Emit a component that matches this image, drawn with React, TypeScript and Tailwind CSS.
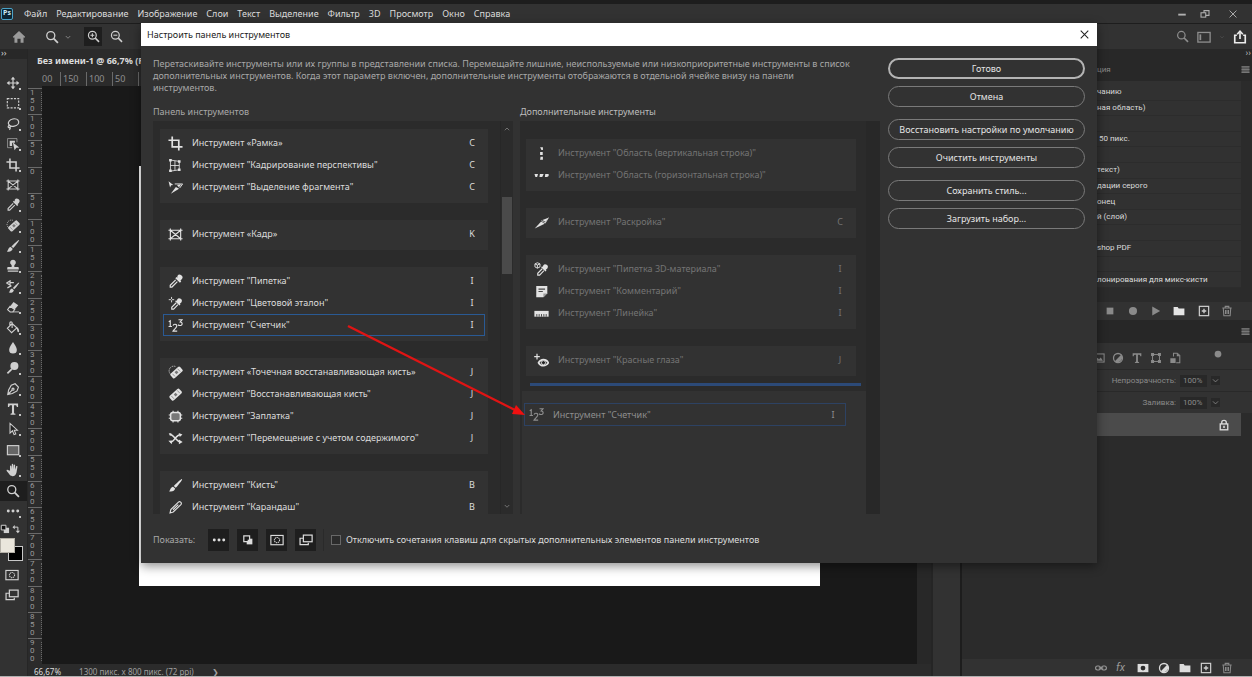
import React, { useState } from 'react';

type IconProps = { name: string; className?: string };

// все рисунки лежат в сетке 16x16
const shapes: Record<string, React.ReactNode> = {
    move: (
        <>
            <path d="M8 2v12M2 8h12" fill="none" stroke="currentColor" strokeWidth="1.4" />
            <path d="M8 0.8l2.6 3.2H5.4zM8 15.2l2.6-3.2H5.4zM0.8 8L4 5.4v5.2zM15.2 8L12 5.4v5.2z" />
        </>
    ),
    marquee: <rect x="1.5" y="3" width="13" height="10.5" fill="none" stroke="currentColor" strokeWidth="1.3" strokeDasharray="2.4 1.4" />,
    lasso: (
        <g fill="none" stroke="currentColor" strokeWidth="1.4">
            <ellipse cx="8.6" cy="6.4" rx="6" ry="4.2" transform="rotate(-12 8.6 6.4)" />
            <path d="M4.4 9.4c-2.4.4-2.6 3-.4 2.8 1.6-.2 1-2.6-.4-2.6M4.4 11.4c.6 1 .4 2.4-.6 3.2" />
        </g>
    ),
    objectSelect: (
        <>
            <path d="M12.5 6V1.8H1.8v10.4H7" fill="none" stroke="currentColor" strokeWidth="0.9" opacity="0.7" />
            <path d="M4.2 4.2h6v2.4H7v3.8H4.2z" />
            <path d="M7.8 6.4l7.4 5.6-3.4.2-2 3z" />
        </>
    ),
    crop: <path d="M4.5 0.5v11h11M0.5 4.5h11v11" fill="none" stroke="currentColor" strokeWidth="1.8" />,
    frame: (
        <g fill="none" stroke="currentColor" strokeWidth="1.2">
            <path d="M2.5 3.5h11v9h-11zM2.5 3.5l11 9M13.5 3.5l-11 9" />
            <path d="M0.5 3.5h2M2.5 1.6v2M15.5 3.5h-2M13.5 1.6v2M0.5 12.5h2M2.5 14.4v-2M15.5 12.5h-2M13.5 14.4v-2" />
        </g>
    ),
    perspective: (
        <g fill="none" stroke="currentColor" strokeWidth="0.9">
            <path d="M2.6 2.2l9.4 1.4v9L2.6 14M7.4 3v10.2M2.6 8h9.4M2.6 2.2V14" />
            <path d="M1.2 1h2.8v2.6H1.2zM10.6 2.4h2.8v2.6h-2.8zM1.2 12.2h2.8v2.6H1.2zM10.6 11.2h2.8v2.6h-2.8z" fill="currentColor" stroke="none" />
        </g>
    ),
    slice: (
        <>
            <path d="M7.6 6.8l3.8 2.6L0.8 14.4z" />
            <path d="M9 5.2l6.4-2.4-3.2 4.6z" />
            <path d="M8 6l4 2.6 3.4-5.8" fill="none" stroke="currentColor" strokeWidth="0.9" />
        </>
    ),
    sliceSelect: (
        <>
            <path d="M0.6 1.4l5 4-2.3.3L2.2 8z" />
            <path d="M7.2 4.2h8.4l-3.2 4.4" fill="none" stroke="currentColor" strokeWidth="1" />
            <path d="M8.4 7.4l3.4 1.8-8.8 5.4zM9.6 5.2l4.8-.6-2.8 3z" />
        </>
    ),
    dropper: (
        <>
            <path d="M9 1.8a2.9 2.9 0 1 1 4.9 3.4l-1.6 1.6.8.9-1.4 1.3L6.8 4.2l1.3-1.3.9.8z" transform="translate(1 .2)" />
            <path d="M8.2 6.2L2.4 12v1.9h1.8l5.8-5.8" fill="none" stroke="currentColor" strokeWidth="1.3" />
        </>
    ),
    sampler: (
        <>
            <path d="M9.8 3.6a2.6 2.6 0 1 1 4.4 3.2l-1.6 1.5.7.8-1.1 1.1-4.6-4.6 1.1-1.1.8.8z" />
            <path d="M8.8 7.2L4 12v2h2l4.6-4.8" fill="none" stroke="currentColor" strokeWidth="1.2" />
            <path d="M3.8 1v5.8M0.8 3.9h6" stroke="currentColor" strokeWidth="1" strokeDasharray="2.3 1.2" />
        </>
    ),
    materialDropper: (
        <>
            <path d="M9.8 3.6a2.6 2.6 0 1 1 4.4 3.2l-1.6 1.5.7.8-1.1 1.1-4.6-4.6 1.1-1.1.8.8z" />
            <path d="M8.8 7.2L4 12v2h2l4.6-4.8" fill="none" stroke="currentColor" strokeWidth="1.2" />
            <path d="M1 2l2.6-1.2L6.4 2v3.2L3.6 6.6 1 5.2zM1 2l2.6 1.2L6.4 2M3.6 3.2v3.4" fill="none" stroke="currentColor" strokeWidth="1" />
        </>
    ),
    spotHeal: (
        <>
            <rect x="-3" y="-6.6" width="6.6" height="13.6" rx="1.6" transform="translate(9 7.6) rotate(48)" />
            <path d="M7 7.6l2-1.8 2.2 2-2.2 2z" fill="#777" />
            <path d="M4.8 9.4l2.6 2.8M10.2 4l2.8 3" stroke="#777" strokeWidth="0.8" />
            <path d="M2 9a5 5 0 0 1 6-7.4" fill="none" stroke="currentColor" strokeWidth="0.9" strokeDasharray="1.2 1" />
        </>
    ),
    heal: (
        <>
            <rect x="-3" y="-7" width="6.4" height="14" rx="1.6" transform="translate(8 8) rotate(48)" />
            <path d="M6.2 8L8 6.2l2.2 2L8 10z" fill="#777" />
            <path d="M3.6 9.6l2.8 3M9.8 3.6l2.8 3" stroke="#777" strokeWidth="0.8" />
        </>
    ),
    patch: (
        <g fill="none" stroke="currentColor">
            <rect x="2.8" y="3.6" width="10.4" height="8.8" rx="2.4" strokeWidth="1.6" fill="#777" />
            <path d="M5.4 1.8V4M10.6 1.8V4M5.4 12.4v2M10.6 12.4v2M0.8 6.4H3M0.8 9.8H3M13 6.4h2.2M13 9.8h2.2" strokeWidth="1.2" />
        </g>
    ),
    contentMove: (
        <>
            <path d="M2 3.6c4 0 7 8 11.6 8M2.4 12C6.6 12 8.4 4 13 4" fill="none" stroke="currentColor" strokeWidth="1.7" />
            <path d="M11.6 9l4 2.8-4 2.4zM11.4 2l4 1.8-2.8 2.6zM0.8 2.4l3 .2-1.6 2.6zM0.4 10.4l4-.4-.4 4z" />
        </>
    ),
    brush: (
        <>
            <path d="M15 1.2c.7.6-5.4 8-6.8 9.2L6.2 8.6C7.8 7 14.2.6 15 1.2z" />
            <path d="M5.4 9.2l2.2 2c-.4 2.6-3.2 3.8-6.6 3 1.6-.6 1.2-4.4 4.4-5z" />
        </>
    ),
    pencil: (
        <g fill="none" stroke="currentColor" strokeWidth="1.2">
            <path d="M2.2 13.8l.8-3.6L11.4 2c1.2-1 3.6 1 2.6 2.6L5.6 12.8z" />
            <path d="M5.4 10.4l5.6-5.4" />
        </g>
    ),
    stamp: <path d="M8 0.8a3.2 3.2 0 0 1 2.2 5.6c-.8.8-.8 1.6-.6 2.8h3.8c.8 0 1.2.6 1.2 1.4v1.4H1.4v-1.4c0-.8.4-1.4 1.2-1.4h3.8c.2-1.2.2-2-.6-2.8A3.2 3.2 0 0 1 8 .8zM2 13h12v1.6H2z" />,
    history: (
        <>
            <path d="M15 2.8c.7.5-4.4 6.8-5.6 7.8L7.8 9.2C9.2 7.8 14.2 2.2 15 2.8zM7 9.8l2 1.8c-.4 2.2-2.8 3.4-6 2.8 1.6-.6 1.2-4 4-4.6z" />
            <path d="M0.8 3.4l3.8-2.4v4.8zM4 3h5M1.6 9l4.6-2.6" fill="none" stroke="currentColor" strokeWidth="1.4" />
        </>
    ),
    eraser: (
        <>
            <path d="M8.6 2.4L14 6l-4 4.6L4.8 7z" />
            <path d="M4.6 7.2L1.8 11l3 2.6h3L10 10.8z" fill="none" stroke="currentColor" strokeWidth="1.2" />
            <path d="M8 13.6h7" stroke="currentColor" strokeWidth="1" />
        </>
    ),
    bucket: (
        <>
            <path d="M7 3L1.6 8.4l4.8 5 6-5.6zM7 8V2.2C7 .6 4.4.6 4.4 2.2v3.4" fill="none" stroke="currentColor" strokeWidth="1.3" />
            <path d="M12 7c2 .4 3.4 2.4 3 5.4-.8.8-1.8.4-2-.6-.2-1.8-.6-3-2.2-3.8z" />
        </>
    ),
    blur: <path d="M8 1c2 3.4 4.4 6 4.4 9a4.4 4.4 0 0 1-8.8 0c0-3 2.4-5.6 4.4-9z" />,
    dodge: (
        <>
            <circle cx="9.6" cy="5.8" r="4.6" />
            <path d="M6.6 9.2L1.6 14.2" stroke="currentColor" strokeWidth="1.9" />
        </>
    ),
    pen: (
        <g fill="none" stroke="currentColor" strokeWidth="1.3">
            <path d="M10.4 2l3.8 3.8-1.6 4.4-5.4 3L2 14.2 3 9l3-5.4zM2.2 14l4.8-4.8" />
            <circle cx="8" cy="8.2" r="1.2" />
        </g>
    ),
    type: <path d="M2.2 1.8h11.6V5.6h-1.4c-.2-1.6-.8-2-2.2-2H9.2v8.8c0 .8.4 1 1.6 1.1v1H5.2v-1c1.2-.1 1.6-.3 1.6-1.1V3.6H5.8c-1.4 0-2 .4-2.2 2H2.2z" />,
    arrow: <path d="M4.6 1.6v11l2.8-2.6 1.8 4.4 2-.8-1.8-4.2h3.6z" fill="#222" stroke="currentColor" strokeWidth="1.2" />,
    rect: <rect x="1.6" y="3" width="13" height="10.4" fill="#666" stroke="currentColor" strokeWidth="1.3" />,
    hand: <path d="M4.6 8.8V3.6c0-1 1.5-1 1.6 0l.4 3.6V1.8c0-1.1 1.6-1.1 1.6 0v5.4L8.8 2.4c.1-1 1.6-.9 1.6.2v5l1.2-3.8c.4-.9 1.7-.5 1.5.5L12 10.8c-.6 2.6-2 4.2-4.6 4.2-2 0-3-1-4-2.6L.8 9c-.5-.9.5-1.7 1.3-1z" />,
    zoom: (
        <g fill="none" stroke="currentColor">
            <circle cx="6.6" cy="6.4" r="4.6" strokeWidth="1.5" />
            <path d="M10 9.8l4.8 4.8" strokeWidth="2" />
        </g>
    ),
    zoomIn: (
        <g fill="none" stroke="currentColor">
            <circle cx="6.6" cy="6.4" r="4.8" strokeWidth="1.5" />
            <path d="M10.2 10l4.6 4.6" strokeWidth="1.9" />
            <path d="M6.6 4v4.8M4.2 6.4H9" strokeWidth="1.3" />
        </g>
    ),
    zoomOut: (
        <g fill="none" stroke="currentColor">
            <circle cx="6.6" cy="6.4" r="4.8" strokeWidth="1.5" />
            <path d="M10.2 10l4.6 4.6" strokeWidth="1.9" />
            <path d="M4.2 6.4H9" strokeWidth="1.3" />
        </g>
    ),
    dots: (
        <>
            <circle cx="2.6" cy="8" r="1.7" />
            <circle cx="8" cy="8" r="1.7" />
            <circle cx="13.4" cy="8" r="1.7" />
        </>
    ),
    swap: (
        <>
            <path d="M3.6 5h5.8v6" fill="none" stroke="currentColor" strokeWidth="1.6" />
            <path d="M4.4 1.6v6.8L0.8 5zM6 10.6h6.8L9.4 14.6z" />
        </>
    ),
    defaults: (
        <>
            <path d="M6 6h8.5v8.5H6z" />
            <path d="M2 2h7.5v7.5H2z" fill="#111" stroke="currentColor" strokeWidth="1.6" />
        </>
    ),
    smallColors: (
        <>
            <path d="M6.5 6.5H13V13H6.5z" />
            <path d="M3.2 3.2h6.6v6.6H3.2z" fill="#1b1b1b" stroke="currentColor" strokeWidth="1.4" />
            <path d="M7.6 7.6h4.8v4.8H7.6z" />
        </>
    ),
    mask: (
        <g fill="none" stroke="currentColor">
            <rect x="1" y="2.8" width="14" height="10.6" strokeWidth="1.3" />
            <circle cx="8" cy="8.1" r="3" strokeWidth="1.2" strokeDasharray="1.5 .7" />
        </g>
    ),
    screen: (
        <g fill="none" stroke="currentColor" strokeWidth="1.4">
            <path d="M4.6 6H1.2v7.4h9.4V11" />
            <rect x="5" y="2.4" width="10" height="7.6" />
        </g>
    ),
    count: (
        <g fill="none" stroke="currentColor" strokeWidth="1.2">
            <path d="M0.8 4L2.4 3v6M0.6 9h3.6" />
            <path d="M5.4 8.2c.4-2.2 4.2-2 4 .4-.2 2-2.8 3.2-4 5.4h4.4" />
            <path d="M11.2 1.8h3.8l-2 2.4c3 .2 2.6 4.2-.4 3.8-.8 0-1.4-.4-1.8-.8" />
        </g>
    ),
    colMarquee: <path d="M6.5 1.2h3v3H8zM6.5 6.5h2.8v3H6.5zM7 11.5h2.5v3.2h-3z" />,
    rowMarquee: <path d="M0.5 6.5h3.8l-1 3H1.5zM6.3 6.5h4l-1.5 3H5.8zM12 6.5h3.6v2L14 9.5h-2.4z" />,
    note: (
        <>
            <path d="M2.4 2h11.8v7.8l-4.2 4.4H2.4z" />
            <path d="M4.8 5.4h7M4.8 8h4.6" fill="none" stroke="#444" strokeWidth="1.3" />
            <path d="M10 14V10h4z" fill="#999" />
        </>
    ),
    ruler: (
        <>
            <path d="M0.4 5.2h15.2v6.2H0.4z" />
            <path d="M3 11.4V8.6M5.5 11.4V8.6M8 11.4V8.6M10.5 11.4V8.6M13 11.4V8.6" stroke="#444" strokeWidth="1" />
        </>
    ),
    redEye: (
        <>
            <path d="M3.2 0.8v6M0.2 3.8h6" stroke="currentColor" strokeWidth="1.3" />
            <path d="M4.8 10.4c2.4-4.4 8-4.4 10.6 0-2.6 4.2-8.2 4.2-10.6 0z" fill="none" stroke="currentColor" strokeWidth="1.7" />
            <circle cx="10.1" cy="10.3" r="2.2" fill="#222" stroke="currentColor" strokeWidth="1" />
        </>
    ),
    home: <path d="M8 1.2l7 6.6-1 1.2-.8-.6v6.2H9.8V10H6.2v4.6H2.8V8.4L2 9 1 7.8z" />,
    workspace: (
        <g fill="none" stroke="currentColor" strokeWidth="1.5">
            <rect x="1" y="2.8" width="14" height="11" />
            <path d="M3.8 5v6.6" strokeWidth="2" />
        </g>
    ),
    share: (
        <g fill="none" stroke="currentColor" strokeWidth="1.9">
            <path d="M4.4 6H2v8.6h12V6h-2.4M8 10.4V2.6" />
            <path d="M4.8 4.8L8 1.4l3.2 3.4" />
        </g>
    ),
    close: <path d="M2.5 2.5l11 11M13.5 2.5l-11 11" fill="none" stroke="currentColor" strokeWidth="1.5" />,
    minimize: <path d="M2 7.5h12v3H2z" />,
    restore: (
        <g fill="none" stroke="currentColor" strokeWidth="1.7">
            <rect x="1.6" y="6" width="7.6" height="7" />
            <path d="M6.4 6V2.6h8v7.6H9.2" />
        </g>
    ),
    chevron: <path d="M3.5 6l4.5 4.5L12.5 6" fill="none" stroke="currentColor" strokeWidth="1.5" />,
    chevronUp: <path d="M3.5 10.5L8 6l4.5 4.5" fill="none" stroke="currentColor" strokeWidth="1.5" />,
    stop: <path d="M3.5 3.5h9v9h-9z" />,
    circle: <circle cx="8" cy="8" r="5.4" />,
    play: <path d="M3 2l10.5 6L3 14z" />,
    folder: <path d="M0.8 2.8h5.4l1.4 1.8h7.6v9H0.8z" />,
    add: (
        <>
            <rect x="1.8" y="1.8" width="12.4" height="12.4" fill="none" stroke="currentColor" strokeWidth="1.6" />
            <path d="M8 5v6M5 8h6" stroke="currentColor" strokeWidth="1.8" />
        </>
    ),
    trash: (
        <g fill="none" stroke="currentColor" strokeWidth="1.4">
            <path d="M1.8 4h12.4M5.6 4V1.8h4.8V4M3 4l.8 10.4h8.4L13 4M6 6.6v5.4M8 6.6v5.4M10 6.6v5.4" />
        </g>
    ),
    image: (
        <>
            <rect x="1.2" y="2.6" width="13.6" height="10.8" fill="none" stroke="currentColor" strokeWidth="1.4" />
            <path d="M3 11.6l3-3.8 2 1.8 2.4-2.4 2.8 4.4z" />
        </>
    ),
    adjust: (
        <>
            <circle cx="8" cy="8" r="6" fill="none" stroke="currentColor" strokeWidth="1.7" />
            <path d="M12.2 3.8a6 6 0 0 1-8.4 8.4z" />
        </>
    ),
    shape: (
        <>
            <rect x="3.4" y="3.4" width="9.2" height="9.2" fill="none" stroke="currentColor" strokeWidth="1.3" />
            <path d="M1.4 1.4h4v4h-4zM10.6 1.4h4v4h-4zM1.4 10.6h4v4h-4zM10.6 10.6h4v4h-4z" />
        </>
    ),
    smart: (
        <>
            <path d="M6 6V1.6h5l3.4 3.2v9.6H9.6" fill="none" stroke="currentColor" strokeWidth="1.4" />
            <path d="M1.8 8.2h7v6.4h-7zM10.4 1.6v4h4z" />
        </>
    ),
    lock: (
        <>
            <rect x="3" y="6.6" width="10" height="7.8" fill="none" stroke="currentColor" strokeWidth="1.8" />
            <path d="M5 6.6V4.4c0-3.4 6-3.4 6 0v2.2" fill="none" stroke="currentColor" strokeWidth="1.8" />
            <path d="M7 9h2v3H7z" />
        </>
    ),
    link: (
        <g fill="none" stroke="currentColor" strokeWidth="1.5">
            <rect x="0.8" y="5.4" width="6.4" height="5.2" rx="2.6" />
            <rect x="8.8" y="5.4" width="6.4" height="5.2" rx="2.6" />
            <path d="M5 8h6" />
        </g>
    ),
    layerMask: (
        <>
            <path d="M0.8 2.6h14.4v11H0.8z" />
            <circle cx="8" cy="8.1" r="3.2" fill="#2b2b2b" />
        </>
    ),
    burger: (
        <>
            <path d="M1 2h14v12H1z" opacity="0.6" />
            <path d="M1 2h14v2H1zM1 7h14v2H1zM1 12h14v2H1z" />
        </>
    ),
};

const Icon = ({ name, className }: IconProps) => (
    <svg viewBox="0 0 16 16" fill="currentColor" aria-hidden="true" className={`shrink-0 ${className ?? ''}`}>
        {shapes[name]}
    </svg>
);

type Tool = { icon: string; label: string; hotkey?: string; selected?: boolean };

const menu = ['Файл', 'Редактирование', 'Изображение', 'Слои', 'Текст', 'Выделение', 'Фильтр', '3D', 'Просмотр', 'Окно', 'Справка'];

const toolbar = [
    'move', 'marquee', 'lasso', 'objectSelect', 'crop', 'frame', 'dropper', 'spotHeal', 'brush', 'stamp', 'history',
    'eraser', 'bucket', 'blur', 'dodge', 'pen', 'type', 'arrow', 'rect', 'hand', 'zoom', 'dots',
];

const rulerMarks = [150, 100, 50, 0, 50, 100, 150, 200, 250, 300, 350, 400, 450, 500, 550, 600, 650, 700, 750, 800, 850, 900];

const mainTools: Tool[][] = [
    [
        { icon: 'crop', label: 'Инструмент «Рамка»', hotkey: 'C' },
        { icon: 'perspective', label: 'Инструмент "Кадрирование перспективы"', hotkey: 'C' },
        { icon: 'sliceSelect', label: 'Инструмент "Выделение фрагмента"', hotkey: 'C' },
    ],
    [{ icon: 'frame', label: 'Инструмент «Кадр»', hotkey: 'K' }],
    [
        { icon: 'dropper', label: 'Инструмент "Пипетка"', hotkey: 'I' },
        { icon: 'sampler', label: 'Инструмент "Цветовой эталон"', hotkey: 'I' },
        { icon: 'count', label: 'Инструмент "Счетчик"', hotkey: 'I', selected: true },
    ],
    [
        { icon: 'spotHeal', label: 'Инструмент «Точечная восстанавливающая кисть»', hotkey: 'J' },
        { icon: 'heal', label: 'Инструмент "Восстанавливающая кисть"', hotkey: 'J' },
        { icon: 'patch', label: 'Инструмент "Заплатка"', hotkey: 'J' },
        { icon: 'contentMove', label: 'Инструмент "Перемещение с учетом содержимого"', hotkey: 'J' },
    ],
    [
        { icon: 'brush', label: 'Инструмент "Кисть"', hotkey: 'B' },
        { icon: 'pencil', label: 'Инструмент "Карандаш"', hotkey: 'B' },
    ],
];

const extraTools: Tool[][] = [
    [
        { icon: 'colMarquee', label: 'Инструмент "Область (вертикальная строка)"' },
        { icon: 'rowMarquee', label: 'Инструмент "Область (горизонтальная строка)"' },
    ],
    [{ icon: 'slice', label: 'Инструмент "Раскройка"', hotkey: 'C' }],
    [
        { icon: 'materialDropper', label: 'Инструмент "Пипетка 3D-материала"', hotkey: 'I' },
        { icon: 'note', label: 'Инструмент "Комментарий"', hotkey: 'I' },
        { icon: 'ruler', label: 'Инструмент "Линейка"', hotkey: 'I' },
    ],
    [{ icon: 'redEye', label: 'Инструмент "Красные глаза"', hotkey: 'J' }],
];

// видимые части строк, остальное закрыто окном
const presets = [
    'чанию', 'ная область)', '', ' 50 пикс.', '', 'текст)', 'дации серого', 'онец', 'й (слой)', '', 'shop PDF', '', 'лонирования для микс-кисти',
];

const ToolGroup = ({ tools, dim }: { tools: Tool[]; dim?: boolean }) => (
    <ul className="bg-[#323232] px-[3px] pt-[3px] pb-[5px]">
        {tools.map((tool) => (
            <li
                key={tool.label}
                className={`flex h-[22px] items-center border px-1 ${tool.selected ? 'border-[#2a5a94]' : 'border-transparent'}`}
            >
                <Icon name={tool.icon} className="h-[15px] w-[15px] text-[#e2e2e2]" />
                <span className={`ml-[9px] flex-1 whitespace-nowrap ${dim ? 'text-[#747474]' : 'text-[#dcdcdc]'}`}>{tool.label}</span>
                <span className={`w-4 text-center ${dim ? 'text-[#747474]' : 'text-[#dcdcdc]'}`}>{tool.hotkey}</span>
            </li>
        ))}
    </ul>
);

const PillButton = ({ text, primary }: { text: string; primary?: boolean }) => (
    <button
        type="button"
        className={`h-[21px] w-full rounded-full whitespace-nowrap text-[#e4e4e4] ${primary ? 'border-2 border-[#b4b4b4]' : 'border border-[#7a7a7a]'}`}
    >
        {text}
    </button>
);

const CustomizeDialog = () => {
    const [disableKeys, setDisableKeys] = useState(false);

    return (
        <section
            role="dialog"
            aria-labelledby="dialog-title"
            className="absolute top-[23px] right-[155px] left-[141px] bg-[#323232] shadow-[0_3px_10px_rgba(0,0,0,0.45)]"
        >
            <header className="flex h-[23px] items-center justify-between bg-white pr-[7px] pl-[6px]">
                <h1 id="dialog-title" className="text-[#1c1c1c]">Настроить панель инструментов</h1>
                <button type="button" aria-label="Закрыть" className="text-[#222]">
                    <Icon name="close" className="h-[11px] w-[11px]" />
                </button>
            </header>

            <div className="flex h-[517px] items-start pt-3 pr-3 pl-3">
                <div className="flex-1">
                    <p className="h-9 w-[702px] leading-[12px] text-[#a8a8a8]">
                        Перетаскивайте инструменты или их группы в представлении списка. Перемещайте лишние, неиспользуемые или
                        низкоприоритетные инструменты в список дополнительных инструментов. Когда этот параметр включен, дополнительные
                        инструменты отображаются в отдельной ячейке внизу на панели инструментов.
                    </p>

                    <div className="mt-2 flex gap-[7px]">
                        <div className="w-[360px]">
                            <h2 className="h-[19px] leading-[19px] text-[#a8a8a8]">Панель инструментов</h2>
                            <div className="flex h-[393px] overflow-hidden bg-[#2b2b2b]">
                                <div className="flex flex-1 flex-col gap-[17px] pt-2 pr-3 pl-[7px]">
                                    {mainTools.map((tools) => (
                                        <ToolGroup key={tools[0].label} tools={tools} />
                                    ))}
                                </div>
                                {/* полоса прокрутки */}
                                <div className="flex w-[13px] flex-col items-center justify-between border-l border-[#272727] py-1 text-[#8a8a8a]">
                                    <Icon name="chevronUp" className="h-2 w-2" />
                                    <div className="mt-[64px] mb-auto h-[77px] w-[10px] bg-[#4a4a4a]" />
                                    <Icon name="chevron" className="h-2 w-2" />
                                </div>
                            </div>
                        </div>

                        <div className="w-[360px]">
                            <h2 className="h-[19px] leading-[19px] text-[#bcbcbc]">Дополнительные инструменты</h2>
                            <div className="flex h-[393px] overflow-hidden bg-[#2b2b2b]">
                                <div className="flex flex-1 flex-col">
                                    <div className="flex flex-col gap-[17px] pt-[18px] pr-[10px] pl-[6px]">
                                        {extraTools.map((tools) => (
                                            <ToolGroup key={tools[0].label} tools={tools} dim />
                                        ))}
                                    </div>
                                    <div className="mt-[7px] ml-[10px] h-[3px] w-[331px] shrink-0 bg-[#2c4a78]" />
                                    <div className="mt-[5px] ml-[2px] flex-1 bg-[#323232] pt-3 pl-[2px]">
                                        <div className="flex h-[23px] w-[322px] items-center border border-[#2d4263] px-1 text-[#8e8e8e]">
                                            <Icon name="count" className="h-[15px] w-[15px]" />
                                            <span className="ml-[9px] flex-1">Инструмент "Счетчик"</span>
                                            <span className="w-4 text-center">I</span>
                                        </div>
                                    </div>
                                </div>
                                <div className="w-[14px] bg-[#282828]" />
                            </div>
                        </div>
                    </div>

                    <div className="mt-[14px] flex h-[23px] items-center text-[#a8a8a8]">
                        <span className="w-[55px]">Показать:</span>
                        <div className="flex gap-2 text-[#dcdcdc]">
                            {['dots', 'smallColors', 'mask', 'screen'].map((name) => (
                                <button key={name} type="button" aria-label={name} className="flex h-[22px] w-[21px] items-center justify-center bg-[#1e1e1e]">
                                    <Icon name={name} className="h-[14px] w-[14px]" />
                                </button>
                            ))}
                        </div>
                        <div className="mx-[7px] h-[22px] w-px bg-[#2a2a2a]" />
                        <label className="flex items-center gap-[5px] whitespace-nowrap text-[#dcdcdc]">
                            <input
                                type="checkbox"
                                checked={disableKeys}
                                onChange={(e) => setDisableKeys(e.target.checked)}
                                className="h-[10px] w-[10px] appearance-none border border-[#686868] bg-[#2b2b2b] checked:bg-[#9a9a9a]"
                            />
                            Отключить сочетания клавиш для скрытых дополнительных элементов панели инструментов
                        </label>
                    </div>
                </div>

                <div className="flex w-[197px] flex-col gap-3">
                    <div className="flex flex-col gap-[7px]">
                        <PillButton text="Готово" primary />
                        <PillButton text="Отмена" />
                    </div>
                    <div className="flex flex-col gap-[7px]">
                        <PillButton text="Восстановить настройки по умолчанию" />
                        <PillButton text="Очистить инструменты" />
                    </div>
                    <div className="flex flex-col gap-[7px]">
                        <PillButton text="Сохранить стиль..." />
                        <PillButton text="Загрузить набор..." />
                    </div>
                </div>
            </div>

            {/* стрелка переноса инструмента */}
            <svg viewBox="0 0 180 96" fill="none" aria-hidden="true" className="pointer-events-none absolute top-[300px] left-[205px] h-[96px] w-[180px]">
                <path d="M2 3l167 84" stroke="#e01414" strokeWidth="2.4" />
                <path d="M179 92l-13-1 4-9z" fill="#f01010" />
            </svg>
        </section>
    );
};

const ToolStrip = () => (
    <nav className="flex w-7 shrink-0 flex-col border-r border-[#262626] bg-[#323232] text-[#d0d0d0]">
        <span className="h-[10px] bg-[#282828] pl-px text-[9px] leading-[8px]">››</span>
        <div className="mt-[14px] flex h-[448px] flex-col justify-between">
            {toolbar.map((name) => (
                <button
                    key={name}
                    type="button"
                    aria-label={name}
                    className={`relative flex h-5 w-full items-center justify-center pr-[2px] ${name === 'zoom' ? 'bg-[#1e1e1e]' : ''}`}
                >
                    <Icon name={name} className="h-[14px] w-[14px]" />
                    {name !== 'frame' && name !== 'zoom' && <span className="absolute right-[6px] bottom-[3px] h-[2px] w-[2px] bg-[#c4c4c4]" />}
                </button>
            ))}
        </div>
        <div className="flex h-4 items-center justify-between pr-[5px]">
            <Icon name="defaults" className="h-[10px] w-[10px]" />
            <Icon name="swap" className="h-[10px] w-[10px]" />
        </div>
        <div className="relative h-[25px]">
            <span className="absolute top-[9px] left-2 h-[15px] w-[15px] border border-[#c8c8c8] bg-black" />
            <span className="absolute top-[1px] left-0 h-[15px] w-[15px] border border-[#b5b1a8] bg-[#eae6dc]" />
        </div>
        <button type="button" aria-label="mask" className="mt-[3px] flex h-5 items-center justify-center pr-[3px]">
            <Icon name="mask" className="h-[14px] w-[14px]" />
        </button>
        <button type="button" aria-label="screen" className="flex h-5 items-center justify-center pr-[3px]">
            <Icon name="screen" className="h-[14px] w-[14px]" />
        </button>
    </nav>
);

const DocumentArea = () => (
    <main className="flex min-w-0 flex-1 flex-col bg-[#2b2b2b]">
        <div className="flex h-[23px] items-center pl-[9px] text-[9px] font-bold whitespace-nowrap text-[#dcdcdc]">Без имени-1 @ 66,7% (RGB/8)</div>
        <div className="flex h-[14px] text-[9px] leading-[14px] text-[#8e8e8e]">
            <span className="w-[14px]" />
            <span className="w-[18px] overflow-hidden">00</span>
            {[150, 100, 50, 0].map((mark) => (
                <span key={mark} className="w-[26px] border-l border-[#6a6a6a] pl-[2px]">{mark}</span>
            ))}
        </div>
        <div className="flex min-h-0 flex-1">
            <div className="flex w-[14px] shrink-0 flex-col pt-[2px] font-[Roboto,sans-serif] text-[8px] text-[#9a9a9a]">
                {rulerMarks.map((mark, i) => (
                    <div key={i} className="flex flex-1 justify-between border-t border-[#6a6a6a] pl-[2px]">
                        <span className="flex flex-col leading-[8px]">
                            {String(mark).split('').map((digit, n) => (
                                <span key={n}>{digit}</span>
                            ))}
                        </span>
                        <span className="my-[3px] border-r border-dotted border-[#6a6a6a]" />
                    </div>
                ))}
            </div>
            <div className="min-w-0 flex-1 bg-[#191919] pt-20 pl-[97px]">
                <div className="h-[420px] w-[681px] bg-white" />
            </div>
            <div className="w-[14px] bg-[#282828]" />
        </div>
        <footer className="flex h-3 items-center gap-[18px] pt-1 pl-[6px] text-[8px] whitespace-nowrap text-[#a0a0a0]">
            <span className="text-[#dcdcdc]">66,67%</span>
            <span>1300 пикс. x 800 пикс. (72 ppi)</span>
            <span>❯</span>
        </footer>
    </main>
);

const PercentField = ({ id, label }: { id: string; label: string }) => (
    <div className="flex h-[22px] items-center justify-end gap-1 border-t border-[#292929] pr-8">
        <label htmlFor={id}>{label}</label>
        <input id={id} defaultValue="100%" className="h-3 w-[27px] bg-[#282828] pl-[3px]" />
        <Icon name="chevron" className="h-[9px] w-[9px] bg-[#282828]" />
    </div>
);

const SidePanels = () => (
    <aside className="flex w-[290px] shrink-0 flex-col bg-[#2b2b2b] font-[Roboto,'Noto_Sans',sans-serif] text-[8px] text-[#8a8a8a]">
        <span className="h-[9px] bg-[#282828] pr-px text-right text-[9px] leading-[8px] text-[#c0c0c0]">››</span>
        <div className="flex h-[23px] items-center justify-between bg-[#282828] pr-[2px] pl-[135px]">
            <span>ция</span>
            <Icon name="burger" className="h-[9px] w-[9px] text-[#777]" />
        </div>
        <ul className="mr-[11px] flex h-[207px] flex-col bg-[#313131] pt-1 whitespace-pre text-[#dcdcdc]">
            {presets.map((text, i) => (
                <li key={i} className="flex flex-1 items-center border-b border-[#2c2c2c] pl-[135px]">{text}</li>
            ))}
        </ul>
        <div className="mt-[14px] flex h-[18px] items-center justify-end gap-[11px] bg-[#323232] pr-[19px]">
            <Icon name="stop" className="h-3 w-3" />
            <Icon name="circle" className="h-3 w-3" />
            <Icon name="play" className="h-3 w-3" />
            <Icon name="folder" className="h-3 w-3 text-[#e4e4e4]" />
            <Icon name="add" className="ml-[2px] h-3 w-3 text-[#cfcfcf]" />
            <Icon name="trash" className="h-3 w-3" />
        </div>
        <div className="flex h-[23px] items-center justify-end bg-[#272727] pr-[2px]">
            <Icon name="burger" className="h-[9px] w-[9px] text-[#777]" />
        </div>
        <div className="bg-[#323232]">
            <div className="flex h-[26px] items-center justify-end gap-[7px] pt-1 pr-[29px]">
                <Icon name="image" className="h-3 w-3" />
                <Icon name="adjust" className="h-3 w-3" />
                <Icon name="type" className="h-3 w-3" />
                <Icon name="shape" className="h-3 w-3" />
                <Icon name="smart" className="h-3 w-3" />
                <Icon name="circle" className="mb-2 ml-[25px] h-[10px] w-[10px]" />
            </div>
            <PercentField id="opacity" label="Непрозрачность:" />
            <PercentField id="fill" label="Заливка:" />
        </div>
        <div className="mr-[11px] flex h-[23px] items-center justify-end bg-[#4b4b4b] pr-[11px] text-[#dcdcdc]">
            <Icon name="lock" className="h-3 w-3" />
        </div>
        <div className="mt-auto flex h-[17px] items-center justify-end gap-[9px] bg-[#323232] pr-[19px] text-[#dcdcdc]">
            <Icon name="link" className="h-3 w-3 text-[#999]" />
            <span className="w-3 text-[11px] leading-3 text-[#999] italic">fx</span>
            <Icon name="layerMask" className="h-3 w-3" />
            <Icon name="adjust" className="h-3 w-3" />
            <Icon name="folder" className="h-3 w-3" />
            <Icon name="add" className="h-3 w-3 text-[#cfcfcf]" />
            <Icon name="trash" className="h-3 w-3 text-[#888]" />
        </div>
    </aside>
);

const App = () => (
    <div className="relative flex h-screen flex-col overflow-hidden border-b border-[#b0b0b0] bg-[#1d1d1d] pt-1 font-['Noto_Sans','Open_Sans',sans-serif] text-[9px]">
        <header className="flex h-[19px] shrink-0 items-center bg-[#323232] pl-[1px] text-[#dcdcdc]">
            <span className="flex h-3 w-3 items-center justify-center rounded-[2px] border border-[#4ba3c7] bg-[#0b2433] text-[7px] font-bold text-[#cfeaf5]">Ps</span>
            <nav className="ml-[11px] flex gap-[9px]">
                {menu.map((item) => (
                    <a key={item} href="#">{item}</a>
                ))}
            </nav>
            <div className="ml-auto flex items-center gap-[13px] pr-[14px] text-[#b0b0b0]">
                <Icon name="minimize" className="h-[10px] w-[10px]" />
                <Icon name="restore" className="h-[10px] w-[10px]" />
                <Icon name="close" className="ml-[5px] h-[10px] w-[10px]" />
            </div>
        </header>
        <div className="mt-px flex h-[25px] shrink-0 items-center bg-[#323232] pl-3 text-[#cfcfcf]">
            <Icon name="home" className="h-[14px] w-[14px] text-[#9a9a9a]" />
            <Icon name="zoom" className="ml-[19px] h-[14px] w-[14px]" />
            <Icon name="chevron" className="ml-[5px] h-2 w-2 text-[#9a9a9a]" />
            <button type="button" aria-label="zoom in" className="ml-3 flex h-[19px] w-[18px] items-center justify-center bg-[#1e1e1e]">
                <Icon name="zoomIn" className="h-[13px] w-[13px]" />
            </button>
            <button type="button" aria-label="zoom out" className="ml-2">
                <Icon name="zoomOut" className="h-[13px] w-[13px]" />
            </button>
            <div className="ml-auto flex items-center gap-2 pr-[5px] text-[#8e8e8e]">
                <Icon name="zoom" className="h-[13px] w-[13px]" />
                <Icon name="workspace" className="h-[14px] w-[14px]" />
                <Icon name="chevron" className="h-[6px] w-[6px] text-[#5a5a5a]" />
                <Icon name="share" className="h-[14px] w-[14px] text-[#ececec]" />
            </div>
        </div>
        <div className="flex min-h-0 flex-1">
            <ToolStrip />
            <DocumentArea />
            <div className="mr-[2px] w-[29px] shrink-0 border-l-2 border-[#252525] bg-[#323232]" />
            <SidePanels />
        </div>
        <CustomizeDialog />
    </div>
);

export default App;
